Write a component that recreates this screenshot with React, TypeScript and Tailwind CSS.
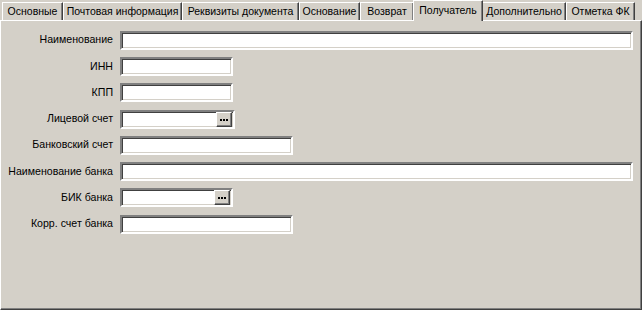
const tabs = [
  { label: 'Основные', w: 'w-[61px]' },
  { label: 'Почтовая информация', w: 'w-[119px]' },
  { label: 'Реквизиты документа', w: 'w-[117px]' },
  { label: 'Основание', w: 'w-[61px]' },
  { label: 'Возврат', w: 'w-[54px]' },
  { label: 'Получатель', w: 'w-[70px]', active: true },
  { label: 'Дополнительно', w: 'w-[84px]' },
  { label: 'Отметка ФК', w: 'w-[69px]' },
];

type Field = {
  label: string;
  width: string;
  picker?: boolean;
};

const fields: Field[] = [
  { label: 'Наименование', width: 'w-[513px]' },
  { label: 'ИНН', width: 'w-[113px]' },
  { label: 'КПП', width: 'w-[113px]' },
  { label: 'Лицевой счет', width: 'w-[115px]', picker: true },
  { label: 'Банковский счет', width: 'w-[173px]' },
  { label: 'Наименование банка', width: 'w-[513px]' },
  { label: 'БИК банка', width: 'w-[113px]', picker: true },
  { label: 'Корр. счет банка', width: 'w-[173px]' },
];

function DotsButton() {
  return (
    <div className="flex h-[15px] w-[16px] items-center justify-center gap-[1px] border border-t-white border-l-white border-r-[#404040] border-b-[#404040] bg-[#d4d0c8] pt-[1px] shadow-[inset_-1px_-1px_0_#808080]">
      <span className="h-[2px] w-[2px] bg-black" />
      <span className="h-[2px] w-[2px] bg-black" />
      <span className="h-[2px] w-[2px] bg-black" />
    </div>
  );
}

function FieldRow({ field }: { field: Field }) {
  return (
    <div className="flex h-[26.3px] items-center">
      <div className="w-[112px] shrink-0 text-right text-[10.6px] text-black">{field.label}</div>
      <div
        className={`ml-[7px] flex h-[19px] ${field.width} items-center justify-end border-2 border-t-[#808080] border-l-[#808080] border-r-white border-b-white bg-white shadow-[inset_1px_1px_0_#404040,inset_-1px_-1px_0_#d4d0c8]`}
      >
        {field.picker && (
          <div className="mr-[1px]">
            <DotsButton />
          </div>
        )}
      </div>
    </div>
  );
}

export default function App() {
  return (
    <div
      className="h-[310px] w-[642px] overflow-hidden bg-[#d4d0c8]"
      style={{ fontFamily: '"Liberation Sans", Arial, sans-serif' }}
    >
      <div className="flex h-[20px] items-end pl-[2px]">
        {tabs.map((t) =>
          t.active ? (
            <div
              key={t.label}
              className={`relative z-10 -mx-[1px] flex h-[21px] ${t.w} items-start justify-center self-start whitespace-nowrap border-l border-t border-l-white border-t-white border-r border-r-[#404040] bg-[#d4d0c8] pt-[2px] text-[10.5px] text-black shadow-[inset_-1px_0_0_#808080]`}
            >
              {t.label}
            </div>
          ) : (
            <div
              key={t.label}
              className={`flex h-[18px] ${t.w} items-center justify-center whitespace-nowrap border-l border-t border-l-white border-t-white border-r border-r-[#404040] text-[10.5px] text-black shadow-[inset_-1px_0_0_#808080]`}
            >
              {t.label}
            </div>
          )
        )}
      </div>
      <div className="flex h-[290px] flex-col border border-t-white border-l-white border-r-[#404040] border-b-[#404040] pt-[6px] shadow-[inset_-1px_-1px_0_#808080]">
        {fields.map((f) => (
          <FieldRow key={f.label} field={f} />
        ))}
      </div>
    </div>
  );
}
